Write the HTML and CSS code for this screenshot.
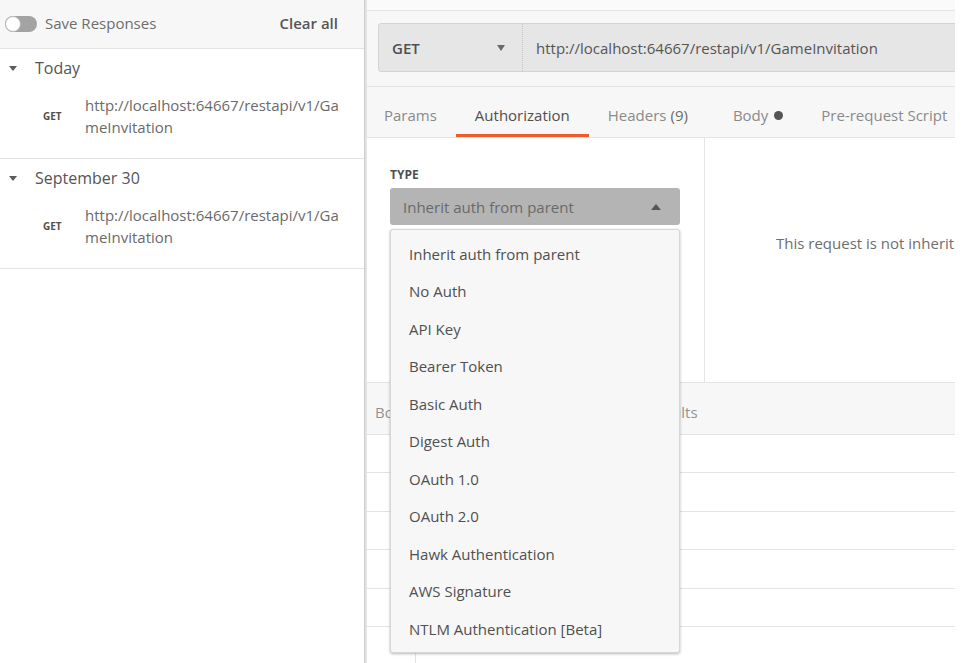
FILE: index.html
```html
<!DOCTYPE html>
<html lang="en">
<head>
<meta charset="utf-8">
<title>Postman - Authorization</title>
<link rel="stylesheet" href="styles.css">
</head>
<body>
<div class="app">
  <aside class="sidebar">
    <div class="sb-head">
      <span class="toggle"><span class="knob"></span></span>
      <span class="save">Save Responses</span>
      <span class="clear">Clear all</span>
    </div>
    <section class="group">
      <div class="group-head"><span class="caret"></span>Today</div>
      <div class="hist-item"><span class="method">GET</span><span class="url">http://localhost:64667/restapi/v1/GameInvitation</span></div>
    </section>
    <section class="group">
      <div class="group-head"><span class="caret"></span>September 30</div>
      <div class="hist-item"><span class="method">GET</span><span class="url">http://localhost:64667/restapi/v1/GameInvitation</span></div>
    </section>
  </aside>
  <div class="divider"></div>
  <main class="main">
    <div class="topstrip"></div>
    <div class="url-row">
      <div class="url-bar">
        <div class="method-select"><span>GET</span><span class="down-caret"></span></div>
        <div class="url-input">http://localhost:64667/restapi/v1/GameInvitation</div>
      </div>
    </div>
    <nav class="req-tabs">
      <span class="tab">Params</span>
      <span class="tab active">Authorization</span>
      <span class="tab">Headers <b class="count">(9)</b></span>
      <span class="tab tab-body">Body <span class="dot"></span></span>
      <span class="tab">Pre-request Script</span>
    </nav>
    <div class="auth">
      <div class="auth-left">
        <div class="type-label">TYPE</div>
        <div class="type-select"><span>Inherit auth from parent</span><span class="up-caret"></span></div>
        <ul class="menu">
          <li>Inherit auth from parent</li>
          <li>No Auth</li>
          <li>API Key</li>
          <li>Bearer Token</li>
          <li>Basic Auth</li>
          <li>Digest Auth</li>
          <li>OAuth 1.0</li>
          <li>OAuth 2.0</li>
          <li>Hawk Authentication</li>
          <li>AWS Signature</li>
          <li>NTLM Authentication [Beta]</li>
        </ul>
      </div>
      <div class="auth-right">
        <p class="note">This request is not inheriting any authorization helper at the moment.</p>
      </div>
    </div>
    <div class="response">
      <div class="res-tabs">
        <span>Body</span>
        <span>Cookies</span>
        <span>Headers (9)</span>
        <span>Test Results</span>
      </div>
      <div class="rows">
        <div class="row"><span class="cell-a"></span></div>
        <div class="row"><span class="cell-a"></span></div>
        <div class="row"><span class="cell-a"></span></div>
        <div class="row"><span class="cell-a"></span></div>
        <div class="row"><span class="cell-a"></span></div>
        <div class="row"><span class="cell-a"></span></div>
      </div>
    </div>
  </main>
</div>
</body>
</html>
```

FILE: styles.css
```css
html, body {
  margin: 0;
  padding: 0;
  background: #ffffff;
  font-family: "Open Sans", "DejaVu Sans", sans-serif;
  color: #505050;
}

.app {
  display: flex;
  width: 955px;
  height: 663px;
  overflow: hidden;
}

/* ---------- Sidebar ---------- */
.sidebar {
  width: 364px;
  flex: none;
  background: #ffffff;
}

.sb-head {
  height: 48px;
  border-bottom: 1px solid #e3e3e3;
  background: #f7f7f7;
  display: flex;
  align-items: center;
  padding: 0 26px 0 5px;
}

.toggle {
  position: relative;
  width: 32px;
  height: 16px;
  border-radius: 8px;
  background: #a3a3a3;
  flex: none;
  margin-top: -1px;
}

.knob {
  position: absolute;
  left: 0;
  top: 0;
  width: 14px;
  height: 14px;
  border-radius: 50%;
  background: #ffffff;
  border: 1px solid #b9b9b9;
}

.save {
  margin-left: 8px;
  margin-top: -2px;
  font-size: 15px;
  color: #6d6d6d;
  flex: 1;
}

.clear {
  margin-top: -2px;
  font-size: 15px;
  font-weight: 600;
  color: #555555;
}

.group {
  border-bottom: 1px solid #e3e3e3;
}

.group-head {
  height: 38px;
  display: flex;
  align-items: center;
  font-size: 16px;
  color: #555555;
}

.caret {
  width: 0;
  height: 0;
  border-left: 4px solid transparent;
  border-right: 4px solid transparent;
  border-top: 5px solid #5a5a5a;
  margin: 1px 18px 0 9px;
}

.hist-item {
  display: flex;
  align-items: center;
  padding: 7px 0 20px 43px;
}

.method {
  width: 42px;
  flex: none;
  font-size: 10px;
  font-weight: 700;
  color: #505050;
}

.url {
  width: 262px;
  font-size: 15px;
  line-height: 22px;
  color: #6a6a6a;
  word-break: break-all;
}

.divider {
  width: 3px;
  flex: none;
  background: #e3e3e3;
  border-left: 1px solid #cdcdcd;
  box-sizing: border-box;
}

/* ---------- Main ---------- */
.main {
  flex: 1;
  min-width: 0;
  display: flex;
  flex-direction: column;
  background: #ffffff;
}

.topstrip {
  height: 10px;
  flex: none;
  background: #fafafa;
  border-bottom: 1px solid #e5e5e5;
}

.url-row {
  flex: none;
  background: #f7f7f7;
  padding: 12px 0 14px 11px;
  border-bottom: 1px solid #e3e3e3;
}

.url-bar {
  display: flex;
  height: 47px;
  width: 620px;
  border: 1px solid #d4d4d4;
  border-radius: 3px 0 0 3px;
  background: #e6e6e6;
}

.method-select {
  width: 144px;
  flex: none;
  display: flex;
  align-items: center;
  justify-content: space-between;
  padding: 0 17px 0 13px;
  box-sizing: border-box;
  border-right: 1px dotted #c4c4c4;
  font-size: 15px;
  font-weight: 600;
  color: #505050;
}

.down-caret {
  width: 0;
  height: 0;
  border-left: 4px solid transparent;
  border-right: 4px solid transparent;
  border-top: 6px solid #6a6a6a;
}

.url-input {
  display: flex;
  align-items: center;
  padding-left: 13px;
  font-size: 15px;
  color: #555555;
  white-space: nowrap;
}

.req-tabs {
  flex: none;
  height: 50px;
  display: flex;
  background: #f7f7f7;
  border-bottom: 1px solid #e3e3e3;
  white-space: nowrap;
}

.tab {
  display: flex;
  align-items: center;
  padding: 9px 19px 0;
  font-size: 15px;
  color: #8a8a8a;
  border-bottom: 3px solid transparent;
}

.tab:first-child {
  padding-left: 17px;
}

.tab-body {
  margin-left: 7px;
}

.tab.active {
  color: #505050;
  border-bottom-color: #ef5a2a;
}

.count {
  font-weight: 400;
  color: #6a6a6a;
  margin-left: 4px;
}

.dot {
  display: inline-block;
  width: 9px;
  height: 9px;
  border-radius: 50%;
  background: #555555;
  margin-left: 6px;
}

/* ---------- Authorization ---------- */
.auth {
  flex: none;
  height: 244px;
  display: flex;
  background: #ffffff;
}

.auth-left {
  position: relative;
  width: 338px;
  flex: none;
  border-right: 1px solid #e6e6e6;
  padding: 29px 0 0 23px;
  box-sizing: border-box;
}

.type-label {
  font-size: 12px;
  line-height: 16px;
  font-weight: 700;
  color: #505050;
}

.type-select {
  margin-top: 5px;
  width: 290px;
  height: 37px;
  border-radius: 3px;
  background: #b4b4b4;
  display: flex;
  align-items: center;
  justify-content: space-between;
  padding: 0 19px 0 13px;
  box-sizing: border-box;
  font-size: 15px;
  color: #6a6a6a;
}

.up-caret {
  width: 0;
  height: 0;
  border-left: 5px solid transparent;
  border-right: 5px solid transparent;
  border-bottom: 6px solid #555555;
}

.menu {
  position: absolute;
  left: 23px;
  top: 91px;
  z-index: 5;
  width: 290px;
  box-sizing: border-box;
  margin: 0;
  padding: 5px 0 4px;
  list-style: none;
  background: #f7f7f7;
  border: 1px solid #d6d6d6;
  border-radius: 3px;
  box-shadow: 0 1px 3px rgba(0, 0, 0, 0.28);
}

.menu li {
  height: 37.5px;
  display: flex;
  align-items: center;
  padding-left: 18px;
  font-size: 15px;
  color: #505050;
}

.auth-right {
  flex: 1;
  min-width: 0;
  overflow: hidden;
}

.note {
  margin: 0;
  padding: 95px 0 0 71px;
  font-size: 15px;
  line-height: 20px;
  color: #6e6e6e;
  white-space: nowrap;
}

/* ---------- Response ---------- */
.response {
  flex: 1;
  border-top: 1px solid #e3e3e3;
}

.res-tabs {
  height: 52px;
  box-sizing: border-box;
  display: flex;
  align-items: center;
  gap: 23px;
  padding: 7px 0 0 8px;
  background: #f7f7f7;
  border-bottom: 1px solid #e3e3e3;
  font-size: 15px;
  color: #939393;
  white-space: nowrap;
}

.row {
  height: 37px;
  border-bottom: 1px solid #e3e3e3;
  display: flex;
}

.row:nth-child(even) {
  height: 38px;
}

.cell-a {
  width: 48px;
  border-right: 1px solid #e3e3e3;
}
```
